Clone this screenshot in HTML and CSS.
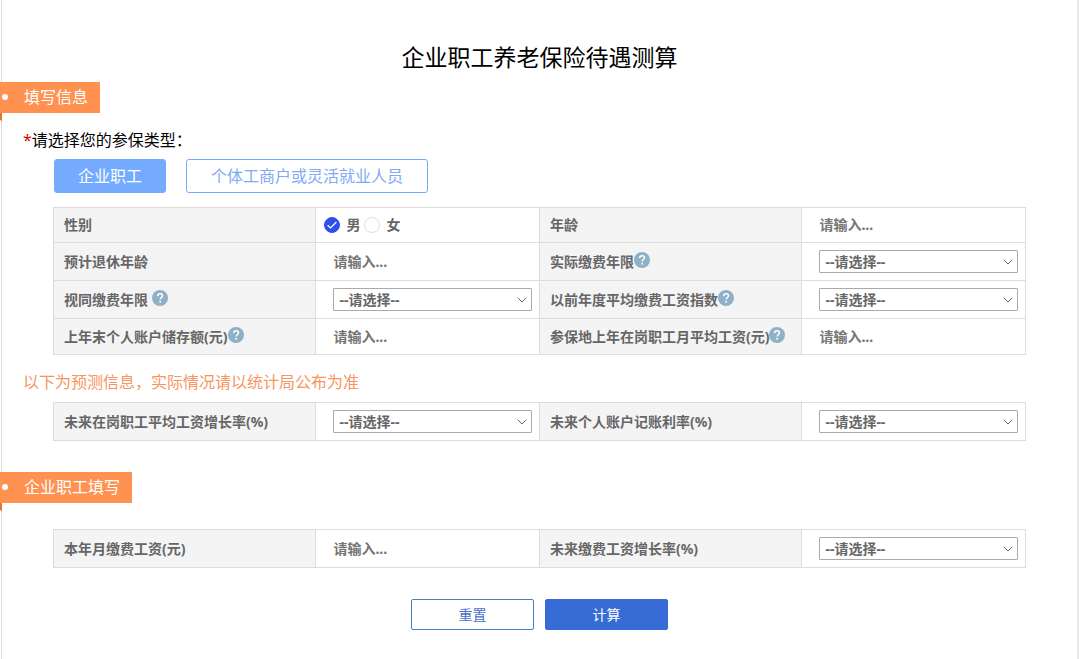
FILE: index.html
```html
<!DOCTYPE html>
<html lang="zh-CN">
<head>
    <meta charset="UTF-8">
    <meta name="viewport" content="width=device-width, initial-scale=1.0">
    <title>企业职工养老保险待遇测算</title>
    <link rel="stylesheet" href="styles.css">
</head>
<body>
    <!-- Help icon used by the labels -->
    <svg class="sprite" aria-hidden="true">
        <symbol id="help" viewBox="0 0 16 16">
            <circle cx="8" cy="8" r="8" fill="#8fb0c6"/>
            <path d="M5.6 6.1C5.7 4.5 6.7 3.7 8.1 3.7c1.4 0 2.4.8 2.4 2.1 0 1.7-2.3 1.8-2.3 3.7" fill="none" stroke="#fff" stroke-width="1.5"/>
            <circle cx="8.2" cy="11.7" r="1" fill="#fff"/>
        </symbol>
    </svg>

    <form class="page">
        <h1>企业职工养老保险待遇测算</h1>

        <h2 class="tag">填写信息</h2>
        <p class="question"><span class="required">*</span>请选择您的参保类型：</p>
        <div class="types">
            <button type="button" class="type active">企业职工</button>
            <button type="button" class="type">个体工商户或灵活就业人员</button>
        </div>

        <table class="info">
            <tr>
                <th>性别</th>
                <td class="sex">
                    <div class="options">
                        <label><input type="radio" name="sex" checked>男</label>
                        <label><input type="radio" name="sex">女</label>
                    </div>
                </td>
                <th><label for="age">年龄</label></th>
                <td><input type="text" id="age" placeholder="请输入..."></td>
            </tr>
            <tr class="tall">
                <th><label for="retire">预计退休年龄</label></th>
                <td><input type="text" id="retire" placeholder="请输入..."></td>
                <th><label for="years">实际缴费年限</label><svg class="help"><use href="#help"/></svg></th>
                <td><select id="years"><option>--请选择--</option></select></td>
            </tr>
            <tr class="tall">
                <th><label for="deemed">视同缴费年限</label> <svg class="help"><use href="#help"/></svg></th>
                <td><select id="deemed"><option>--请选择--</option></select></td>
                <th><label for="index">以前年度平均缴费工资指数</label><svg class="help"><use href="#help"/></svg></th>
                <td><select id="index"><option>--请选择--</option></select></td>
            </tr>
            <tr class="last">
                <th><label for="balance">上年末个人账户储存额(元)</label><svg class="help"><use href="#help"/></svg></th>
                <td><input type="text" id="balance" placeholder="请输入..."></td>
                <th><label for="average">参保地上年在岗职工月平均工资(元)</label><svg class="help"><use href="#help"/></svg></th>
                <td><input type="text" id="average" placeholder="请输入..."></td>
            </tr>
        </table>

        <p class="notice">以下为预测信息，实际情况请以统计局公布为准</p>
        <table class="info">
            <tr class="tall">
                <th><label for="growth">未来在岗职工平均工资增长率(%)</label></th>
                <td><select id="growth"><option>--请选择--</option></select></td>
                <th><label for="rate">未来个人账户记账利率(%)</label></th>
                <td><select id="rate"><option>--请选择--</option></select></td>
            </tr>
        </table>

        <h2 class="tag second">企业职工填写</h2>
        <table class="info">
            <tr class="tall">
                <th><label for="wage">本年月缴费工资(元)</label></th>
                <td><input type="text" id="wage" placeholder="请输入..."></td>
                <th><label for="wage-growth">未来缴费工资增长率(%)</label></th>
                <td><select id="wage-growth"><option>--请选择--</option></select></td>
            </tr>
        </table>

        <div class="actions">
            <button type="reset">重置</button>
            <button type="button" class="primary">计算</button>
        </div>
    </form>
</body>
</html>
```
FILE: styles.css
```css
* {
    box-sizing: border-box;
}
body {
    margin: 0;
    font-family: "Noto Sans", "Noto Sans CJK SC", sans-serif;
    font-size: 16px;
    line-height: 24px;
    color: #000;
    background-color: #fff;
}
button, input, select {
    font: inherit;
    color: inherit;
}
.sprite {
    display: none;
}
.page {
    min-height: 100vh;
    margin: 0 1px;
    padding: 40px 0 29px;
    border-left: 1px solid #ddd;
    border-right: 2px solid #e9e9e9;
}
h1 {
    margin: 0 0 8px;
    font-size: 23px;
    line-height: 34px;
    font-weight: normal;
    text-align: center;
}
.tag {
    position: relative;
    width: fit-content;
    margin: 0 0 0 -2px;
    padding: 0 12px 0 24px;
    font-size: 16px;
    line-height: 31px;
    font-weight: normal;
    color: #fff;
    background-color: #ff9151;
}
.tag::before {
    content: "";
    position: absolute;
    left: 2px;
    top: 12px;
    width: 6px;
    height: 6px;
    border-radius: 50%;
    background-color: #fff;
}
/* folded corner under the tag */
.tag::after {
    content: "";
    position: absolute;
    left: 0;
    top: 100%;
    width: 2px;
    height: 9px;
    background-color: #e8742f;
    clip-path: polygon(0 0, 100% 0, 100% 100%, 0 70%);
}
.tag.second {
    margin-top: 31px;
    margin-bottom: 26px;
}
.question {
    margin: 15px 21px 7px;
}
.required {
    color: #e60000;
}
.types {
    display: flex;
    gap: 20px;
    margin: 0 52px 14px;
}
.type {
    height: 34px;
    padding: 0 24px;
    border: 1px solid #74abff;
    border-radius: 3px;
    color: #7eabf3;
    background-color: #fff;
}
.type.active {
    padding: 0 23px;
    color: #fff;
    background-color: #74abff;
}
.info {
    width: calc(100% - 102px);
    margin: 0 51px;
    table-layout: fixed;
    border-collapse: collapse;
    font-size: 14px;
    line-height: 22px;
    font-weight: bold;
    color: #666;
}
.info th, .info td {
    height: 35px;
    border: 1px solid #ddd;
}
.info .tall th, .info .tall td {
    height: 38px;
}
.info .last th, .info .last td {
    height: 36px;
}
.info th {
    width: 27%;
    padding: 0 0 0 10px;
    text-align: left;
    white-space: nowrap;
    background-color: #f4f4f4;
}
.info td {
    width: 23%;
    padding: 0 7px 0 17px;
}
.info .sex {
    padding-left: 8px;
}
.options {
    display: flex;
    gap: 4px;
}
.options label {
    display: flex;
    align-items: center;
    gap: 6px;
}
.info input[type="text"] {
    display: block;
    width: 100%;
    height: 22px;
    padding: 0;
    border: 0;
    outline: none;
}
.info input::placeholder {
    color: #757575;
}
input[type="radio"] {
    appearance: none;
    width: 16px;
    height: 16px;
    margin: 0;
    border: 1px solid #ddd;
    border-radius: 50%;
    background-color: #fff;
}
input[type="radio"]:checked {
    border-color: #2d50ea;
    background: #2d50ea url("data:image/svg+xml,%3Csvg xmlns='http://www.w3.org/2000/svg' viewBox='0 0 14 14'%3E%3Cpath d='M2.6 7.2l2.9 2.8L11.4 4' fill='none' stroke='%23fff' stroke-width='1.2'/%3E%3C/svg%3E") center / 14px no-repeat;
}
select {
    appearance: none;
    display: block;
    width: 100%;
    height: 23px;
    padding: 0 24px 0 5px;
    border: 1px solid #aaa;
    border-radius: 1px;
    line-height: 21px;
    background: #fff url("data:image/svg+xml,%3Csvg xmlns='http://www.w3.org/2000/svg' viewBox='0 0 10 6'%3E%3Cpath d='M.7.7L5 5 9.3.7' fill='none' stroke='%23666'/%3E%3C/svg%3E") right 4px center / 10px 6px no-repeat;
}
.help {
    width: 16px;
    height: 16px;
    vertical-align: -1px;
}
.notice {
    margin: 15px 21px 8px;
    color: #f79563;
}
.actions {
    display: flex;
    justify-content: center;
    gap: 11px;
    margin-top: 31px;
}
.actions button {
    width: 123px;
    height: 31px;
    border: 1px solid #4c7cc4;
    border-radius: 2px;
    font-size: 14px;
    color: #4a6fc8;
    background-color: #fff;
}
.actions .primary {
    color: #fff;
    border-color: #376bd6;
    background-color: #376bd6;
}
```
